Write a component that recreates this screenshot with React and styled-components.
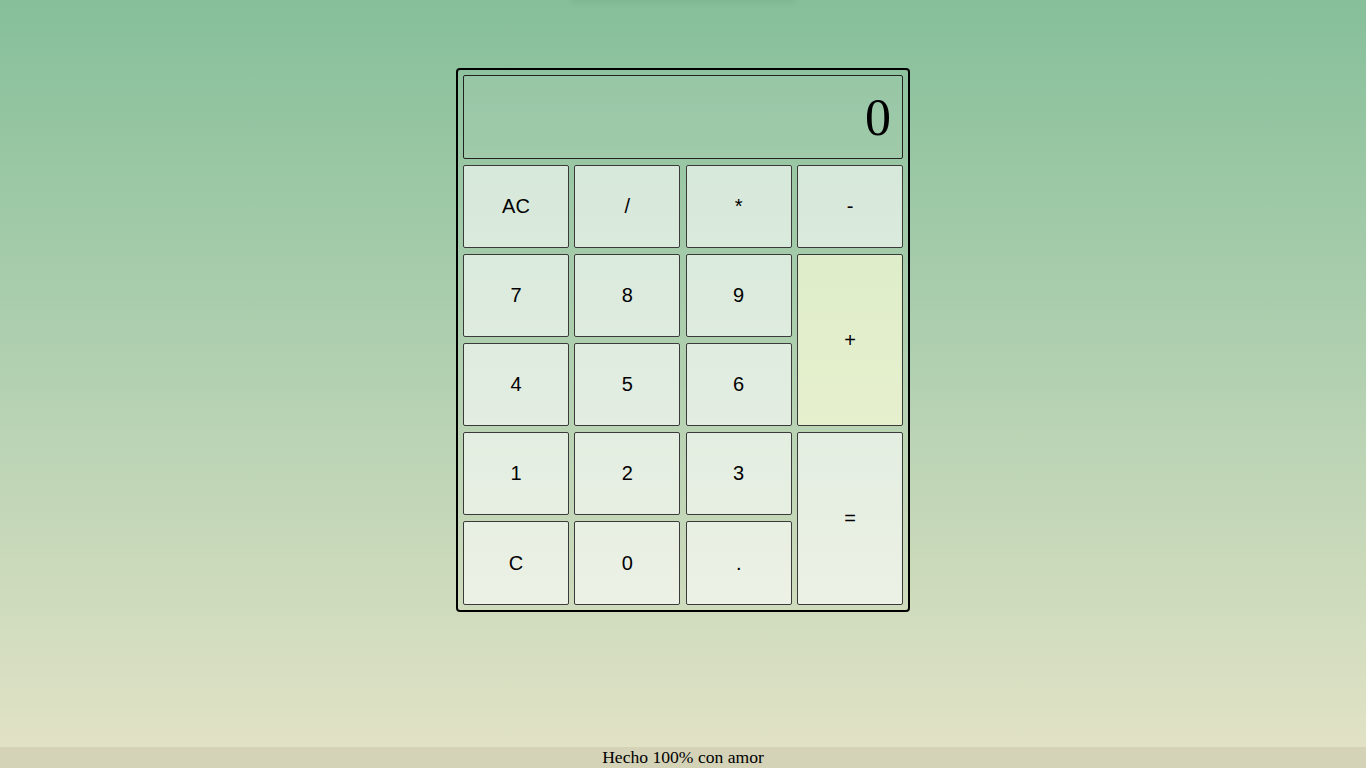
import React, { useState } from 'react';
import styled, { createGlobalStyle } from 'styled-components';

const GlobalStyle = createGlobalStyle`
  html, body {
    margin: 0;
    padding: 0;
  }
  body {
    font-family: "Liberation Serif", "Times New Roman", serif;
    background: linear-gradient(to bottom, #86bf9a 0%, #b3d1b1 50%, #e4e3c6 100%);
    min-height: 100vh;
  }
`;

const Page = styled.div`
  display: flex;
  flex-direction: column;
  min-height: 100vh;
`;

const TopShade = styled.div`
  width: 220px;
  height: 0;
  margin: 0 auto;
  box-shadow: 0 0 6px 1px rgba(40, 90, 60, 0.25);
`;

const Main = styled.main`
  flex: 1;
  display: flex;
  justify-content: center;
  align-items: flex-start;
  padding-top: 68px;
`;

const Calculator = styled.div`
  width: 440px;
  padding: 5px;
  border: 2px solid #000;
  border-radius: 4px;
`;

const Display = styled.div`
  box-sizing: border-box;
  height: 84px;
  margin-bottom: 6px;
  padding: 0 11px;
  display: flex;
  align-items: center;
  justify-content: flex-end;
  border: 1px solid #222;
  border-radius: 2px;
  background: rgba(255, 255, 255, 0.08);
  font-family: "Liberation Serif", "Times New Roman", serif;
  font-size: 52px;
  color: #000;
`;

const Keys = styled.div`
  display: grid;
  grid-template-columns: repeat(4, 1fr);
  grid-template-rows: repeat(4, 83px) 1fr;
  column-gap: 5.33px;
  row-gap: 6px;
  height: 440px;
`;

const Key = styled.button`
  box-sizing: border-box;
  margin: 0;
  padding: 0;
  border: 1px solid #3a3a3a;
  border-radius: 2px;
  background: ${p => (p.$accent ? 'rgba(255, 255, 220, 0.65)' : 'rgba(255, 255, 255, 0.6)')};
  grid-row: ${p => (p.$tall ? 'span 2' : 'auto')};
  font-family: "Liberation Sans", Arial, sans-serif;
  font-size: 20px;
  color: #000;
  cursor: pointer;

  &:hover {
    background: rgba(255, 255, 255, 0.8);
  }
`;

const Footer = styled.footer`
  height: 21px;
  line-height: 21px;
  text-align: center;
  background: #d4d3b8;
  font-family: "Liberation Serif", "Times New Roman", serif;
  font-size: 17.6px;
  color: #000;
`;

const keys = [
  { label: 'AC' },
  { label: '/' },
  { label: '*' },
  { label: '-' },
  { label: '7' },
  { label: '8' },
  { label: '9' },
  { label: '+', tall: true, accent: true },
  { label: '4' },
  { label: '5' },
  { label: '6' },
  { label: '1' },
  { label: '2' },
  { label: '3' },
  { label: '=', tall: true },
  { label: 'C' },
  { label: '0' },
  { label: '.' },
];

export default function App() {
  const [value, setValue] = useState('0');

  const press = label => {
    if (label === 'AC') return setValue('0');
    if (label === 'C') return setValue(v => (v.length > 1 ? v.slice(0, -1) : '0'));
    if (label === '=') {
      try {
        // eslint-disable-next-line no-new-func
        const out = Function(`return (${value})`)();
        setValue(String(out));
      } catch (e) {
        setValue('0');
      }
      return;
    }
    setValue(v => (v === '0' && label !== '.' ? label : v + label));
  };

  return (
    <>
      <GlobalStyle />
      <Page>
        <TopShade />
        <Main>
          <Calculator>
            <Display>{value}</Display>
            <Keys>
              {keys.map(k => (
                <Key
                  key={k.label}
                  $tall={k.tall}
                  $accent={k.accent}
                  onClick={() => press(k.label)}
                >
                  {k.label}
                </Key>
              ))}
            </Keys>
          </Calculator>
        </Main>
        <Footer>Hecho 100% con amor</Footer>
      </Page>
    </>
  );
}
